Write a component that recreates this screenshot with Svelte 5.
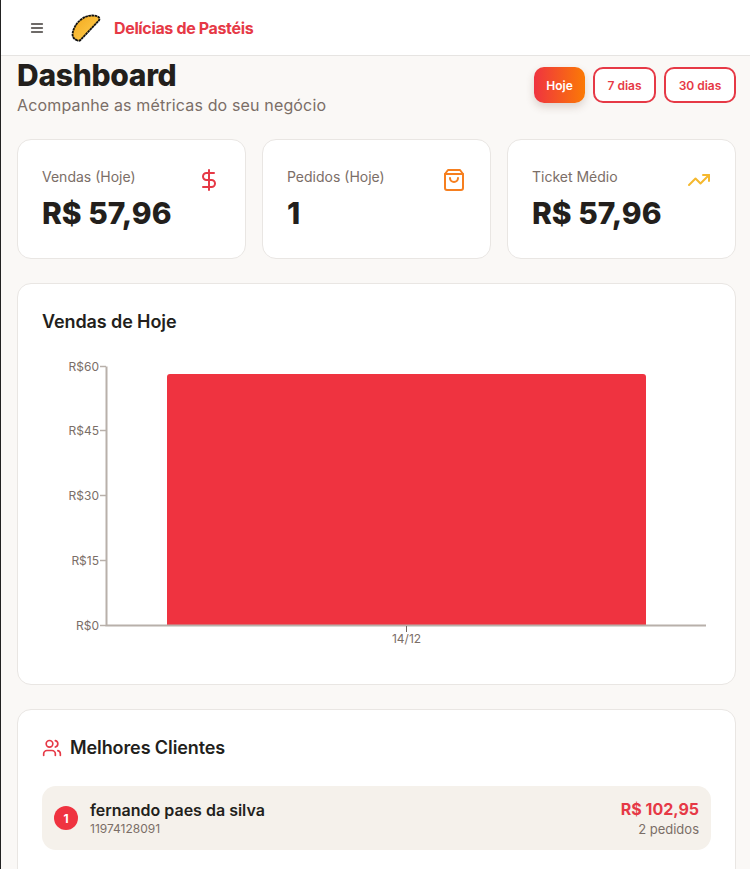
<script>
  const stats = [
    { label: 'Vendas (Hoje)', value: 'R$ 57,96', icon: 'dollar' },
    { label: 'Pedidos (Hoje)', value: '1', icon: 'bag' },
    { label: 'Ticket Médio', value: 'R$ 57,96', icon: 'trend' }
  ];
  const yTicks = [
    { label: 'R$60', y: 8.5 },
    { label: 'R$45', y: 72.5 },
    { label: 'R$30', y: 137.5 },
    { label: 'R$15', y: 202.5 },
    { label: 'R$0', y: 267.5 }
  ];
</script>

<div class="page">
  <header class="topbar">
    <button class="menu" aria-label="Menu">
      <svg width="16" height="16" viewBox="0 0 24 24" fill="none" stroke="#3f3a37" stroke-width="2.4" stroke-linecap="round"><path d="M4 6h16M4 12h16M4 18h16" /></svg>
    </button>
    <svg class="logo" width="32" height="30" viewBox="0 0 32 30">
      <defs>
        <linearGradient id="dough" x1="0" y1="0" x2="1" y2="1">
          <stop offset="0" stop-color="#f3a81c" />
          <stop offset="1" stop-color="#ffd052" />
        </linearGradient>
      </defs>
      <path d="M7.5 27.5C4.5 26.5 2 24 2.6 20.5 3.6 13 10 4.6 19 2.8c3.4-.6 7-.4 9.2 1 1.400.9 1.700 2.600.6 3.800L10.500 27c-.8.800-2 .9-3 .5z" fill="url(#dough)" stroke="#111" stroke-width="1.800" stroke-dasharray="2.600 .5" stroke-linejoin="round" />
    </svg>
    <span class="brand">Delícias de Pastéis</span>
  </header>

  <main class="content">
    <section class="heading">
      <div>
        <h1>Dashboard</h1>
        <p>Acompanhe as métricas do seu negócio</p>
      </div>
      <div class="ranges">
        <button class="range active">Hoje</button>
        <button class="range r7">7 dias</button>
        <button class="range r30">30 dias</button>
      </div>
    </section>

    <section class="stats">
      {#each stats as s}
        <article class="card stat">
          <div>
            <div class="stat-label">{s.label}</div>
            <div class="stat-value">{s.value}</div>
          </div>
          {#if s.icon === 'dollar'}
            <svg class="stat-icon" width="24" height="24" viewBox="0 0 24 24" fill="none" stroke="#e63946" stroke-width="2" stroke-linecap="round" stroke-linejoin="round"><path d="M12 2v20M17 5H9.500a3.500 3.500 0 0 0 0 7h5a3.500 3.500 0 0 1 0 7H6" /></svg>
          {:else if s.icon === 'bag'}
            <svg class="stat-icon" width="24" height="24" viewBox="0 0 24 24" fill="none" stroke="#f67f1f" stroke-width="2" stroke-linecap="round" stroke-linejoin="round"><path d="M6 2 3 6v14a2 2 0 0 0 2 2h14a2 2 0 0 0 2-2V6l-3-4Z" /><path d="M3 6h18" /><path d="M16 10a4 4 0 0 1-8 0" /></svg>
          {:else}
            <svg class="stat-icon" width="24" height="24" viewBox="0 0 24 24" fill="none" stroke="#f5b82e" stroke-width="2" stroke-linecap="round" stroke-linejoin="round"><path d="m22 7-8.500 8.500-5-5L2 17" /><path d="M16 7h6v6" /></svg>
          {/if}
        </article>
      {/each}
    </section>

    <section class="card chart-card">
      <h2>Vendas de Hoje</h2>
      <svg class="chart" width="669" height="300" viewBox="0 0 669 300">
        <rect x="125" y="16" width="479" height="251" rx="3" fill="#ef3340" />
        <rect x="125" y="262" width="479" height="5" fill="#ef3340" />
        <path d="M64.500 8.500V267.500H664" fill="none" stroke="#b8b0aa" stroke-width="2" />
        {#each yTicks as t}
          <path d={`M58 ${t.y}h6`} stroke="#b8b0aa" stroke-width="1.500" />
          <text x="57" y={t.y + 4} text-anchor="end" class="tick">{t.label}</text>
        {/each}
        <path d="M364.500 268v6" stroke="#6f6560" stroke-width="1" />
        <text x="364.500" y="285" text-anchor="middle" class="tick">14/12</text>
      </svg>
    </section>

    <section class="card clients">
      <div class="clients-head">
        <svg width="20" height="20" viewBox="0 0 24 24" fill="none" stroke="#e63946" stroke-width="2" stroke-linecap="round" stroke-linejoin="round"><path d="M16 21v-2a4 4 0 0 0-4-4H6a4 4 0 0 0-4 4v2" /><circle cx="9" cy="7" r="4" /><path d="M22 21v-2a4 4 0 0 0-3-3.870" /><path d="M16 3.130a4 4 0 0 1 0 7.750" /></svg>
        <h2>Melhores Clientes</h2>
      </div>
      <div class="client-row">
        <span class="rank">1</span>
        <div class="client-info">
          <div class="client-name">fernando paes da silva</div>
          <div class="client-phone">11974128091</div>
        </div>
        <div class="client-total">
          <div class="total-value">R$ 102,95</div>
          <div class="total-orders">2 pedidos</div>
        </div>
      </div>
    </section>
  </main>
</div>

<style>
  :global(body) {
    margin: 0;
    background: #faf8f6;
  }
  .page {
    height: 869px;
    overflow: hidden;
    box-sizing: border-box;
    border-left: 1px solid #222;
    background: #faf8f6;
    font-family: Inter, "Noto Sans", sans-serif;
    color: #231f1c;
  }
  .topbar {
    height: 55px;
    display: flex;
    align-items: center;
    background: #fff;
    border-bottom: 1px solid #e6e4e2;
  }
  .menu {
    width: 16px;
    height: 16px;
    margin-left: 28px;
    padding: 0;
    border: 0;
    background: none;
    display: flex;
  }
  .logo {
    margin-left: 25px;
  }
  .brand {
    margin-left: 12px;
    font-size: 16px;
    font-weight: 700;
    letter-spacing: -0.35px;
    color: #e63946;
  }
  .content {
    padding: 0 14px 0 16px;
  }
  .heading {
    height: 83px;
    display: flex;
    justify-content: space-between;
    align-items: flex-start;
  }
  h1 {
    margin: 0;
    padding-top: 1px;
    font-size: 30px;
    line-height: 36px;
    font-weight: 800;
    letter-spacing: -0.3px;
  }
  .heading p {
    margin: 0;
    font-size: 16px;
    line-height: 24px;
    color: #7b6e67;
    letter-spacing: 0.15px;
  }
  .ranges {
    display: flex;
    gap: 8px;
    margin-top: 11px;
  }
  .range {
    height: 36px;
    box-sizing: border-box;
    border: 2px solid #e63946;
    border-radius: 10px;
    background: #fff;
    color: #e63946;
    font: 600 12px Inter, sans-serif;
    padding: 0;
  }
  .range.active {
    width: 51px;
    border: 0;
    color: #fff;
    background: linear-gradient(90deg, #ef3340, #fb7a05);
    box-shadow: 0 4px 8px rgba(100, 60, 40, 0.2);
  }
  .r7 { width: 63px; }
  .r30 { width: 72px; }
  .card {
    box-sizing: border-box;
    background: #fff;
    border: 1px solid #e9e6e3;
    border-radius: 14px;
  }
  .stats {
    display: grid;
    grid-template-columns: repeat(3, 1fr);
    gap: 16px;
  }
  .stat {
    height: 120px;
    padding: 24px;
    display: flex;
    justify-content: space-between;
    align-items: flex-start;
  }
  .stat-label {
    margin-top: 3px;
    font-size: 14px;
    line-height: 20px;
    color: #7b6e67;
  }
  .stat-value {
    margin-top: 8px;
    font-size: 30px;
    line-height: 36px;
    font-weight: 800;
    white-space: nowrap;
  }
  .stat-icon {
    margin-top: 4px;
    flex: none;
  }
  .chart-card {
    height: 402px;
    margin-top: 24px;
    padding: 24px;
  }
  h2 {
    margin: 0;
    font-size: 18px;
    line-height: 28px;
    font-weight: 600;
    letter-spacing: -0.1px;
  }
  .chart {
    display: block;
    margin-top: 22px;
  }
  .tick {
    font-family: Inter, sans-serif;
    font-size: 12px;
    fill: #7b6e67;
  }
  .clients {
    height: 200px;
    margin-top: 24px;
    padding: 24px;
  }
  .clients-head {
    display: flex;
    align-items: center;
    gap: 8px;
  }
  .client-row {
    margin-top: 24px;
    height: 64px;
    display: flex;
    align-items: center;
    gap: 12px;
    padding: 0 12px;
    border-radius: 14px;
    background: #f5f1eb;
  }
  .rank {
    width: 24px;
    height: 24px;
    border-radius: 50%;
    flex: none;
    display: flex;
    align-items: center;
    justify-content: center;
    background: #ef3340;
    color: #fff;
    font-size: 12px;
    font-weight: 700;
  }
  .client-info {
    flex: 1;
  }
  .client-name {
    font-size: 16px;
    line-height: 22px;
    font-weight: 600;
  }
  .client-phone {
    font-size: 12px;
    line-height: 16px;
    color: #7b6e67;
  }
  .client-total {
    text-align: right;
  }
  .total-value {
    font-size: 16px;
    line-height: 22px;
    font-weight: 700;
    color: #e63946;
  }
  .total-orders {
    font-size: 13px;
    line-height: 18px;
    color: #7b6e67;
  }
</style>
